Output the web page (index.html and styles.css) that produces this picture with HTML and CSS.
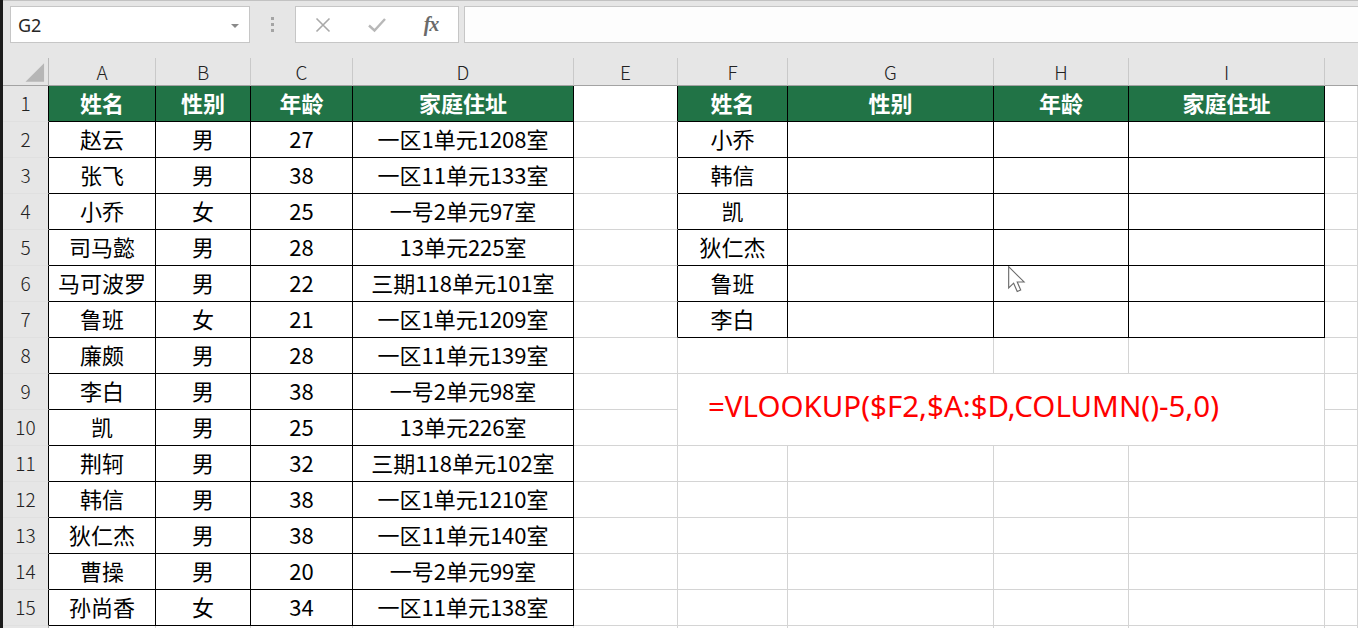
FILE: index.html
```html
<!DOCTYPE html>
<html lang="zh-CN">
<head>
<meta charset="utf-8">
<title>Sheet</title>
<link rel="stylesheet" href="styles.css">
</head>
<body>
<div class="app">
  <div class="toolbar">
    <div class="namebox"><span class="nb-text">G2</span><span class="nb-arrow"></span></div>
    <div class="dots"><i></i><i></i><i></i></div>
    <div class="fxbox">
      <span class="ic"><svg width="18" height="18" viewBox="0 0 18 18"><path d="M2.5 2.5 L15.5 15.5 M15.5 2.5 L2.5 15.5" stroke="#a9a9a9" stroke-width="1.6" fill="none"/></svg></span>
      <span class="ic"><svg width="20" height="18" viewBox="0 0 20 18"><path d="M2 9.5 L7.5 14.5 L18 3" stroke="#b8b8b8" stroke-width="2.4" fill="none"/></svg></span>
      <span class="ic fx">fx</span>
    </div>
    <div class="formula"></div>
  </div>

  <div class="sheet">
    <div class="hd corner"><svg width="46" height="27" viewBox="0 0 46 27"><polygon points="42,5 42,24 23,24" fill="#b6b6b6"/></svg></div>
    <div class="hd">A</div><div class="hd">B</div><div class="hd">C</div><div class="hd">D</div><div class="hd">E</div><div class="hd">F</div><div class="hd">G</div><div class="hd">H</div><div class="hd">I</div><div class="hd last"></div>

    <div class="rh rhb">1</div><div class="c b g">姓名</div><div class="c b g">性别</div><div class="c b g">年龄</div><div class="c b g">家庭住址</div><div class="c er"></div><div class="c b g">姓名</div><div class="c b g">性别</div><div class="c b g">年龄</div><div class="c b g">家庭住址</div><div class="c"></div>

    <div class="rh rhb">2</div><div class="c b">赵云</div><div class="c b">男</div><div class="c b">27</div><div class="c b">一区1单元1208室</div><div class="c er"></div><div class="c b">小乔</div><div class="c b"></div><div class="c b"></div><div class="c b"></div><div class="c"></div>

    <div class="rh rhb">3</div><div class="c b">张飞</div><div class="c b">男</div><div class="c b">38</div><div class="c b">一区11单元133室</div><div class="c er"></div><div class="c b">韩信</div><div class="c b"></div><div class="c b"></div><div class="c b"></div><div class="c"></div>

    <div class="rh rhb">4</div><div class="c b">小乔</div><div class="c b">女</div><div class="c b">25</div><div class="c b">一号2单元97室</div><div class="c er"></div><div class="c b">凯</div><div class="c b"></div><div class="c b"></div><div class="c b"></div><div class="c"></div>

    <div class="rh rhb">5</div><div class="c b">司马懿</div><div class="c b">男</div><div class="c b">28</div><div class="c b">13单元225室</div><div class="c er"></div><div class="c b">狄仁杰</div><div class="c b"></div><div class="c b"></div><div class="c b"></div><div class="c"></div>

    <div class="rh rhb">6</div><div class="c b">马可波罗</div><div class="c b">男</div><div class="c b">22</div><div class="c b">三期118单元101室</div><div class="c er"></div><div class="c b">鲁班</div><div class="c b"></div><div class="c b"></div><div class="c b"></div><div class="c"></div>

    <div class="rh rhb">7</div><div class="c b">鲁班</div><div class="c b">女</div><div class="c b">21</div><div class="c b">一区1单元1209室</div><div class="c er"></div><div class="c b">李白</div><div class="c b"></div><div class="c b"></div><div class="c b"></div><div class="c"></div>

    <div class="rh rhb">8</div><div class="c b">廉颇</div><div class="c b">男</div><div class="c b">28</div><div class="c b">一区11单元139室</div><div class="c"></div><div class="c"></div><div class="c"></div><div class="c"></div><div class="c"></div><div class="c"></div>

    <div class="rh rhb">9</div><div class="c b">李白</div><div class="c b">男</div><div class="c b">38</div><div class="c b">一号2单元98室</div><div class="c"></div><div class="c merged">=VLOOKUP($F2,$A:$D,COLUMN()-5,0)</div><div class="c"></div>

    <div class="rh rhb">10</div><div class="c b">凯</div><div class="c b">男</div><div class="c b">25</div><div class="c b">13单元226室</div><div class="c"></div><div class="c"></div>

    <div class="rh rhb">11</div><div class="c b">荆轲</div><div class="c b">男</div><div class="c b">32</div><div class="c b">三期118单元102室</div><div class="c"></div><div class="c"></div><div class="c"></div><div class="c"></div><div class="c"></div><div class="c"></div>

    <div class="rh rhb">12</div><div class="c b">韩信</div><div class="c b">男</div><div class="c b">38</div><div class="c b">一区1单元1210室</div><div class="c"></div><div class="c"></div><div class="c"></div><div class="c"></div><div class="c"></div><div class="c"></div>

    <div class="rh rhb">13</div><div class="c b">狄仁杰</div><div class="c b">男</div><div class="c b">38</div><div class="c b">一区11单元140室</div><div class="c"></div><div class="c"></div><div class="c"></div><div class="c"></div><div class="c"></div><div class="c"></div>

    <div class="rh rhb">14</div><div class="c b">曹操</div><div class="c b">男</div><div class="c b">20</div><div class="c b">一号2单元99室</div><div class="c"></div><div class="c"></div><div class="c"></div><div class="c"></div><div class="c"></div><div class="c"></div>

    <div class="rh rhb">15</div><div class="c b">孙尚香</div><div class="c b">女</div><div class="c b">34</div><div class="c b">一区11单元138室</div><div class="c"></div><div class="c"></div><div class="c"></div><div class="c"></div><div class="c"></div><div class="c"></div>

    <div class="rh"></div><div class="c"></div><div class="c"></div><div class="c"></div><div class="c"></div><div class="c"></div><div class="c"></div><div class="c"></div><div class="c"></div><div class="c"></div><div class="c"></div>

    <svg class="cursor" width="18" height="27" viewBox="0 0 16 24"><path d="M0.6 0.6 L0.6 19.5 L5 15.3 L8.2 22.6 L11.3 21.3 L8.2 14.2 L14.3 14.2 Z" fill="#ffffff" stroke="#6a6a6a" stroke-width="1" stroke-linejoin="miter"/></svg>
  </div>
</div>
</body>
</html>
```

FILE: styles.css
```css
html, body {
  margin: 0;
  padding: 0;
}
body {
  width: 1358px;
  height: 628px;
  overflow: hidden;
  background: #ffffff;
  font-family: "Noto Sans CJK SC", "Noto Sans", sans-serif;
}
.app {
  border-left: 3px solid #1c1c1c;
  height: 628px;
  box-sizing: border-box;
  overflow: hidden;
}

/* ---------- formula bar ---------- */
.toolbar {
  height: 58px;
  box-sizing: border-box;
  background: #e6e6e6;
  border-top: 1px solid #c2c2c2;
  padding-top: 5px;
  padding-left: 7px;
  display: flex;
  align-items: flex-start;
}
.namebox {
  width: 240px;
  height: 37px;
  box-sizing: border-box;
  background: #ffffff;
  border: 1px solid #c6c6c6;
  display: flex;
  align-items: center;
  justify-content: space-between;
  padding: 0 10px 0 7px;
}
.nb-text {
  font-family: "Noto Sans", "Liberation Sans", sans-serif;
  font-size: 18px;
  color: #262626;
}
.nb-arrow {
  width: 0;
  height: 0;
  border-left: 4px solid transparent;
  border-right: 4px solid transparent;
  border-top: 4px solid #8a8a8a;
  margin-top: 2px;
}
.dots {
  width: 45px;
  height: 37px;
  display: flex;
  flex-direction: column;
  align-items: center;
  justify-content: center;
  gap: 3px;
}
.dots i {
  display: block;
  width: 3px;
  height: 3px;
  background: #a4a4a4;
}
.fxbox {
  width: 164px;
  height: 37px;
  box-sizing: border-box;
  background: #ffffff;
  border: 1px solid #c6c6c6;
  display: flex;
  align-items: center;
}
.ic {
  width: 54px;
  height: 35px;
  display: flex;
  align-items: center;
  justify-content: center;
}
.fx {
  font-family: "Liberation Serif", "DejaVu Serif", serif;
  font-style: italic;
  font-weight: bold;
  font-size: 20px;
  color: #6a6a6a;
  letter-spacing: -1px;
}
.formula {
  flex: 1;
  height: 37px;
  margin-left: 5px;
  box-sizing: border-box;
  background: #fdfdfd;
  border: 1px solid #c6c6c6;
  border-right: none;
}

/* ---------- sheet grid ---------- */
.sheet {
  position: relative;
  display: grid;
  grid-template-columns: 46px 107px 95px 102px 221px 104px 110px 206px 135px 196px 1fr;
  grid-template-rows: 28px;
  grid-auto-rows: 36px;
}
.hd {
  background: #e6e6e6;
  border-right: 1px solid #c9c9c9;
  border-bottom: 1px solid #a3a3a3;
  box-sizing: border-box;
  display: flex;
  align-items: center;
  justify-content: center;
  font-family: "Noto Sans CJK SC", "Noto Sans", sans-serif;
  font-weight: 300;
  font-size: 19px;
  color: #222222;
  padding-bottom: 1px;
}
.hd.last {
  border-right: none;
}
.corner {
  border-right: 1px solid #b9b9b9;
  padding: 0;
  align-items: stretch;
}
.rh {
  background: #e6e6e6;
  border-right: 1px solid #a3a3a3;
  border-bottom: 1px solid #e0e0e0;
  box-sizing: border-box;
  display: flex;
  align-items: center;
  justify-content: center;
  font-family: "Noto Sans CJK SC", "Noto Sans", sans-serif;
  font-weight: 300;
  font-size: 19px;
  color: #222222;
  padding-bottom: 3px;
}
.rhb {
  border-right-color: #000000;
}
.c {
  box-sizing: border-box;
  border-right: 1px solid #d4d4d4;
  border-bottom: 1px solid #d4d4d4;
  display: flex;
  align-items: center;
  justify-content: center;
  font-size: 22px;
  color: #000000;
  white-space: nowrap;
  overflow: hidden;
  padding-bottom: 4px;
}
.c.b {
  border-right-color: #000000;
  border-bottom-color: #000000;
}
.c.er {
  border-right-color: #000000;
}
.c.g {
  background: #217346;
  color: #ffffff;
  font-weight: bold;
}
.merged {
  grid-column: 7 / 11;
  grid-row: 10 / 12;
  justify-content: flex-start;
  padding-left: 30px;
  padding-bottom: 8px;
  font-family: "Noto Sans", "Noto Sans CJK SC", sans-serif;
  font-size: 29.5px;
  color: #ff0000;
}
.cursor {
  position: absolute;
  left: 1005px;
  top: 208px;
}
```
